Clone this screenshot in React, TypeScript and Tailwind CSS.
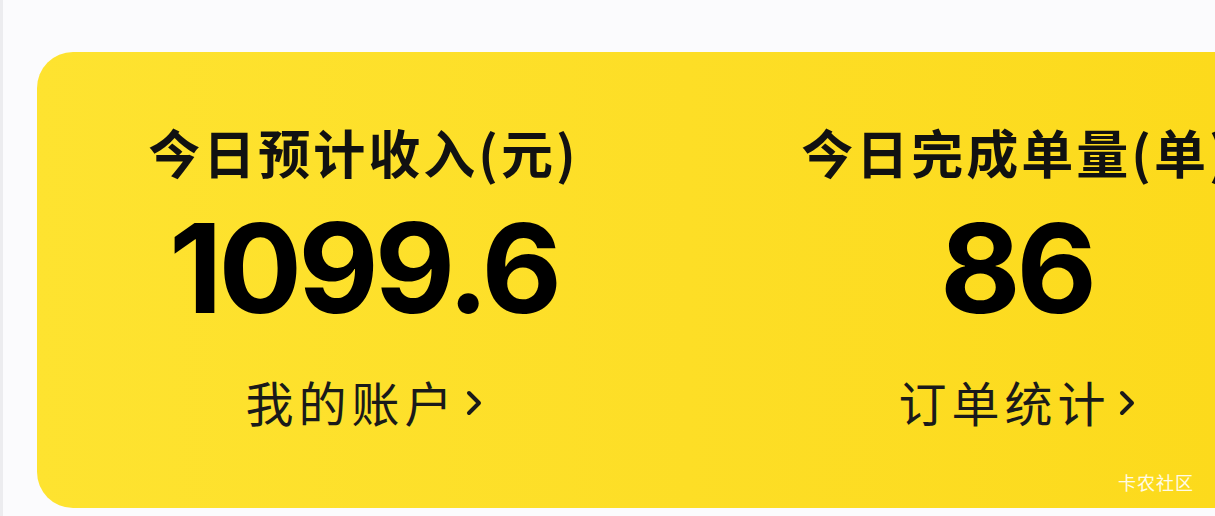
export default function App() {
  const stats = [
    { title: "今日预计收入(元)", value: "1099.6", link: "我的账户" },
    { title: "今日完成单量(单)", value: "86", link: "订单统计" },
  ]

  return (
    <div
      className="w-[1215px] h-[516px] overflow-hidden bg-[#fbfbfd] border-l-[3px] border-[#ececef] relative"
      style={{ fontFamily: '"Noto Sans CJK SC", "Noto Sans", sans-serif' }}
    >
      <div className="pt-[52px] pl-[34px]">
        <div className="w-[1306px] h-[456px] rounded-[36px] bg-gradient-to-r from-[#fee330] to-[#fcd919] grid grid-cols-2">
          {stats.map((s) => (
            <div key={s.title} className="flex flex-col items-center pt-[70px]">
              <div className="text-[52px] leading-[60px] font-semibold text-[#111] tracking-[3px] whitespace-nowrap">
                {s.title}
              </div>
              <div
                className="mt-[36px] text-[124px] leading-[100px] font-bold text-black tracking-[-4px]"
                style={{ fontFamily: "Inter, sans-serif" }}
              >
                {s.value}
              </div>
              <div className="mt-[55px] flex items-center text-[48px] leading-[56px] text-[#1a1a1a] tracking-[5px]">
                {s.link}
                <svg width="16" height="26" viewBox="0 0 16 26" className="ml-[8px] mt-[4px]">
                  <polyline points="3,3 13,13 3,23" fill="none" stroke="#1a1a1a" strokeWidth="4" strokeLinecap="round" strokeLinejoin="round" />
                </svg>
              </div>
            </div>
          ))}
        </div>
      </div>
      <div className="absolute right-[21px] bottom-[20px] text-[18px] text-white/90 tracking-[1px]">
        卡农社区
      </div>
    </div>
  )
}
